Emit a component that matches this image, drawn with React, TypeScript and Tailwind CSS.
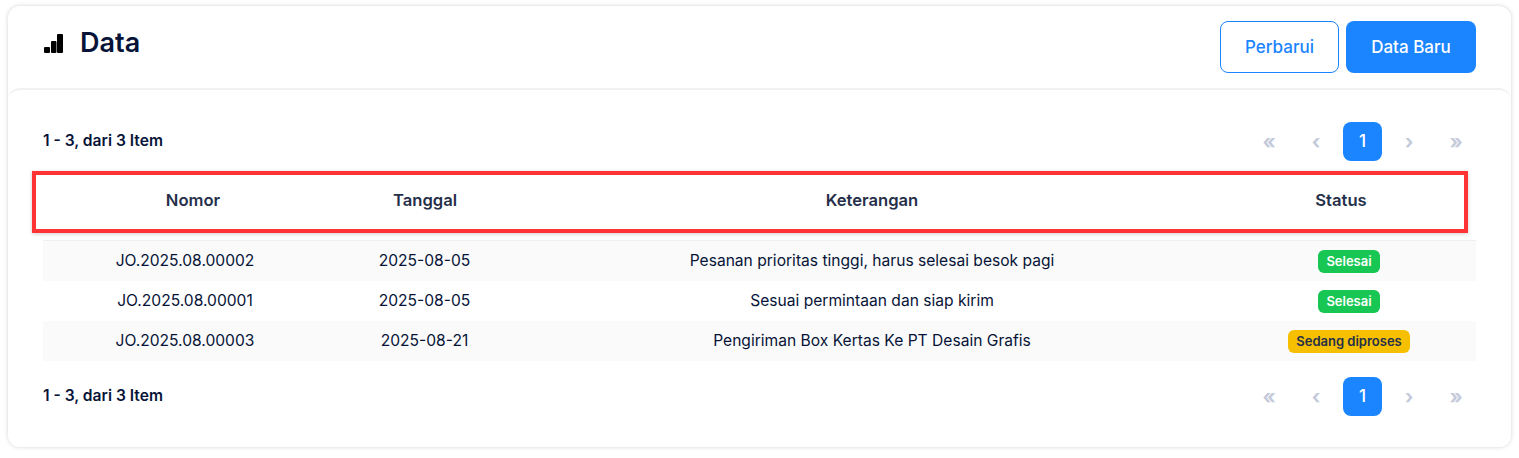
const rows = [
  { nomor: 'JO.2025.08.00002', tanggal: '2025-08-05', keterangan: 'Pesanan prioritas tinggi, harus selesai besok pagi', status: 'Selesai' },
  { nomor: 'JO.2025.08.00001', tanggal: '2025-08-05', keterangan: 'Sesuai permintaan dan siap kirim', status: 'Selesai' },
  { nomor: 'JO.2025.08.00003', tanggal: '2025-08-21', keterangan: 'Pengiriman Box Kertas Ke PT Desain Grafis', status: 'Sedang diproses' },
]

function Pager() {
  const arrow = 'flex h-[39px] w-[39px] items-center justify-center text-[20px] font-bold text-[#c4cada]'
  return (
    <div className="flex items-center gap-2">
      <span className={`${arrow} pl-px`}>«</span>
      <span className={`${arrow} pl-px`}>‹</span>
      <span className="flex h-[39px] w-[39px] items-center justify-center rounded-lg bg-[#1b84ff] text-[17px] font-medium text-white">1</span>
      <span className={`${arrow} pr-px`}>›</span>
      <span className={`${arrow} pr-px`}>»</span>
    </div>
  )
}

function PagerRow() {
  return (
    <div className="flex items-center justify-between">
      <span className="-mt-0.5 text-[15.6px] font-semibold text-[#071437]">1 - 3, dari 3 Item</span>
      <Pager />
    </div>
  )
}

export default function App() {
  return (
    <div className="h-[458px] overflow-hidden bg-white px-2 pt-[6px] font-['Inter',sans-serif]">
      <div className="rounded-xl bg-white shadow-[0_0_4px_rgba(0,0,0,0.18)]">
        <div className="flex h-[82px] items-start justify-between pl-9 pr-[35px] pt-[15px]">
          <div className="flex items-center gap-[17px] pt-1">
            <svg width="19" height="19" viewBox="0 0 19 19" className="fill-black">
              <rect x="0" y="13" width="6" height="6" rx="1" />
              <rect x="7" y="7" width="5.5" height="12" rx="1" />
              <rect x="13" y="0" width="6" height="19" rx="1" />
            </svg>
            <h1 className="text-[27px] leading-[36px] font-semibold text-[#071437]">Data</h1>
          </div>
          <div className="flex gap-[7px]">
            <button type="button" className="h-[52px] w-[119px] rounded-lg border border-[#1b84ff] pt-0.5 text-[17px] font-medium text-[#1b84ff]">Perbarui</button>
            <button type="button" className="h-[52px] w-[130px] rounded-lg bg-[#1b84ff] pt-0.5 text-[17px] font-medium text-white">Data Baru</button>
          </div>
        </div>
        <div className="rounded-xl border-t-2 border-[#f1f1f4] bg-white px-[35px] pb-[31px] pt-[32px]">
          <PagerRow />
          <div className="relative mt-[10px]">
            <div className="grid h-[70px] grid-cols-[300px_164px_730px_1fr] items-center border-b border-[#eeeff2] pb-[11px] text-center text-[16.6px] font-semibold text-[#252f4a]">
              <div>Nomor</div>
              <div>Tanggal</div>
              <div>Keterangan</div>
              <div className="pr-[31px]">Status</div>
            </div>
            <div className="absolute -left-[11px] top-0 h-[62px] w-[1436px] border-4 border-[#ff3333] shadow-[0_1px_4px_rgba(0,0,0,0.2)]" />
            {rows.map((row, i) => (
              <div
                key={row.nomor}
                className={i % 2 === 0
                  ? 'grid h-10 grid-cols-[284px_195px_700px_1fr] items-center bg-[#fafafa] text-center text-[15.6px] text-[#071437]'
                  : 'grid h-10 grid-cols-[284px_195px_700px_1fr] items-center bg-white text-center text-[15.6px] text-[#071437]'}
              >
                <div>{row.nomor}</div>
                <div>{row.tanggal}</div>
                <div>{row.keterangan}</div>
                <div className="flex justify-center">
                  <span
                    className={row.status === 'Selesai'
                      ? 'rounded-md bg-[#17c653] px-2 py-[3px] text-[13px] leading-[17px] font-semibold text-white'
                      : 'rounded-md bg-[#f6c000] px-2 py-[3px] text-[13px] leading-[17px] font-semibold text-[#252f4a]'}
                  >
                    {row.status}
                  </span>
                </div>
              </div>
            ))}
          </div>
          <div className="mt-4">
            <PagerRow />
          </div>
        </div>
      </div>
    </div>
  )
}
